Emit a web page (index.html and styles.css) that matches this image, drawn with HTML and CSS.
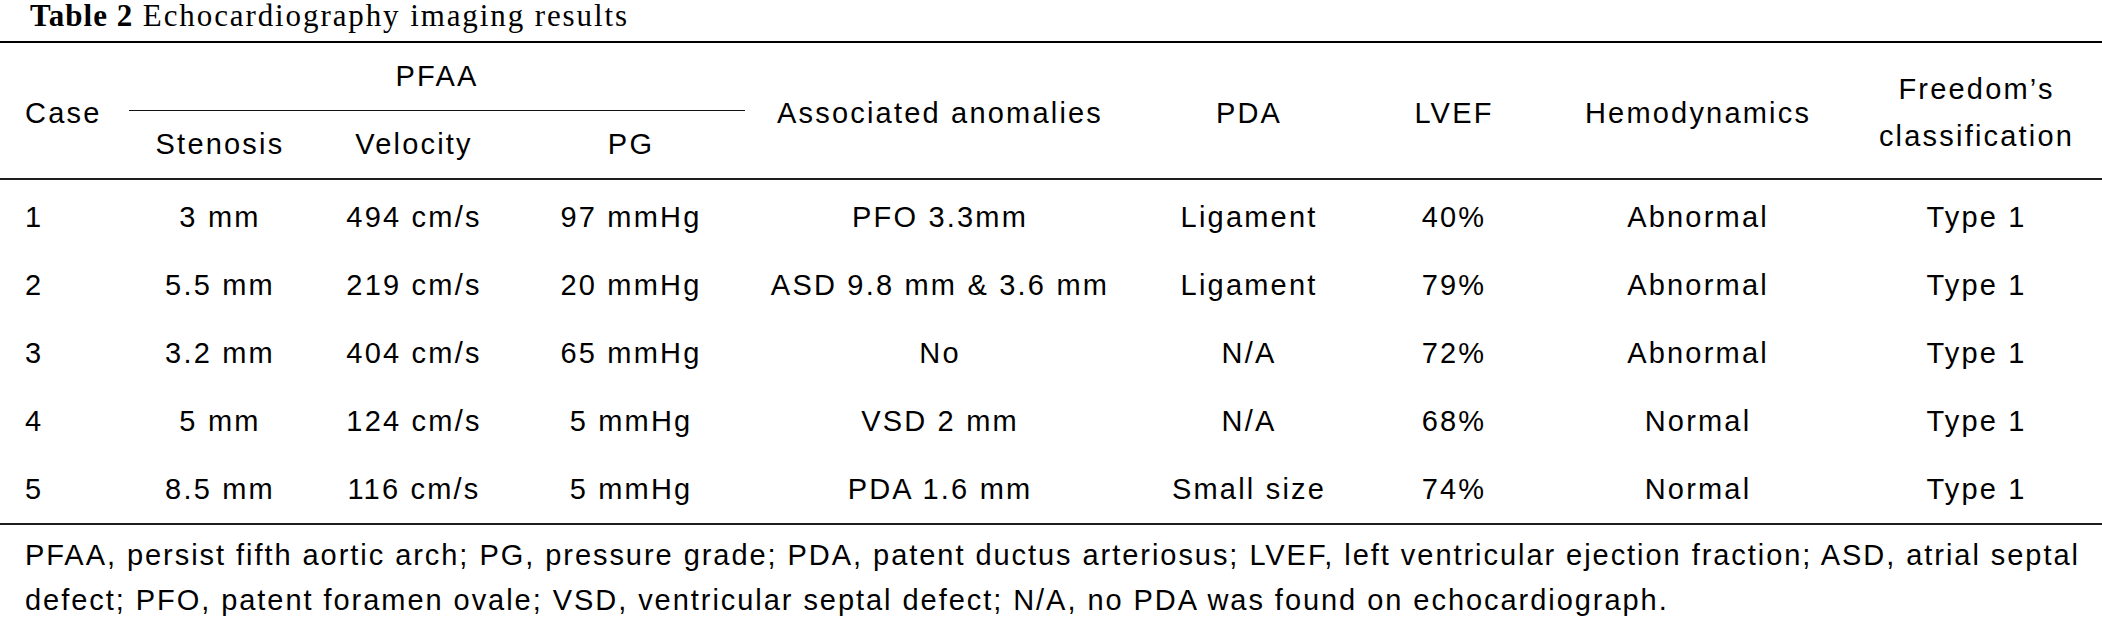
FILE: index.html
```html
<!DOCTYPE html>
<html lang="en">
<head>
<meta charset="utf-8">
<title>Table 2 Echocardiography imaging results</title>
<link rel="stylesheet" href="styles.css">
</head>
<body>
<div class="page">
  <h1 class="caption"><span class="cap-label">Table 2</span> Echocardiography imaging results</h1>
  <table class="results">
    <colgroup>
      <col class="c-case">
      <col class="c-sten">
      <col class="c-vel">
      <col class="c-pg">
      <col class="c-assoc">
      <col class="c-pda">
      <col class="c-lvef">
      <col class="c-hemo">
      <col class="c-class">
    </colgroup>
    <thead>
      <tr class="head-top">
        <th rowspan="2" class="case span">Case</th>
        <th colspan="3" class="group">PFAA</th>
        <th rowspan="2" class="span">Associated anomalies</th>
        <th rowspan="2" class="span">PDA</th>
        <th rowspan="2" class="span">LVEF</th>
        <th rowspan="2" class="span">Hemodynamics</th>
        <th rowspan="2" class="span">Freedom’s classification</th>
      </tr>
      <tr class="head-sub">
        <th>Stenosis</th>
        <th>Velocity</th>
        <th>PG</th>
      </tr>
    </thead>
    <tbody>
      <tr>
        <td class="case">1</td><td>3 mm</td><td>494 cm/s</td><td>97 mmHg</td><td>PFO 3.3mm</td><td>Ligament</td><td>40%</td><td>Abnormal</td><td>Type 1</td>
      </tr>
      <tr>
        <td class="case">2</td><td>5.5 mm</td><td>219 cm/s</td><td>20 mmHg</td><td>ASD 9.8 mm &amp; 3.6 mm</td><td>Ligament</td><td>79%</td><td>Abnormal</td><td>Type 1</td>
      </tr>
      <tr>
        <td class="case">3</td><td>3.2 mm</td><td>404 cm/s</td><td>65 mmHg</td><td>No</td><td>N/A</td><td>72%</td><td>Abnormal</td><td>Type 1</td>
      </tr>
      <tr>
        <td class="case">4</td><td>5 mm</td><td>124 cm/s</td><td>5 mmHg</td><td>VSD 2 mm</td><td>N/A</td><td>68%</td><td>Normal</td><td>Type 1</td>
      </tr>
      <tr>
        <td class="case">5</td><td>8.5 mm</td><td>116 cm/s</td><td>5 mmHg</td><td>PDA 1.6 mm</td><td>Small size</td><td>74%</td><td>Normal</td><td>Type 1</td>
      </tr>
    </tbody>
  </table>
  <p class="note">PFAA, persist fifth aortic arch; PG, pressure grade; PDA, patent ductus arteriosus; LVEF, left ventricular ejection fraction; ASD, atrial septal defect; PFO, patent foramen ovale; VSD, ventricular septal defect; N/A, no PDA was found on echocardiograph.</p>
</div>
</body>
</html>
```
FILE: styles.css
```css
html, body {
  margin: 0;
  padding: 0;
  background: #ffffff;
  overflow: hidden;
}

.page {
  width: 2102px;
  color: #000000;
  font-family: "Liberation Sans", Arial, Helvetica, sans-serif;
  font-size: 29px;
  letter-spacing: 2.2px;
}

.caption {
  margin: 0;
  padding: 0 0 10px 30px;
  font-family: "Liberation Serif", "Times New Roman", serif;
  font-size: 31px;
  font-weight: normal;
  line-height: 31px;
  letter-spacing: 1.9px;
}

.cap-label {
  font-weight: bold;
  letter-spacing: 1px;
}

.results {
  width: 2102px;
  table-layout: fixed;
  border-collapse: separate;
  border-spacing: 0;
  border-top: 2px solid #000000;
  border-bottom: 2px solid #1e1e1e;
}

.c-case { width: 129px; }
.c-sten { width: 182px; }
.c-vel { width: 206px; }
.c-pg { width: 228px; }
.c-assoc { width: 390px; }
.c-pda { width: 228px; }
.c-lvef { width: 182px; }
.c-hemo { width: 306px; }
.c-class { width: 251px; }

.results th,
.results td {
  padding: 0;
  text-align: center;
  vertical-align: middle;
  font-weight: normal;
  white-space: normal;
}

.results th {
  line-height: 47px;
}

.head-top {
  height: 68px;
}

.head-sub {
  height: 69px;
}

.results th.group {
  border-bottom: 1px solid #111111;
}

.results th.span {
  padding-top: 5px;
  border-bottom: 2px solid #1e1e1e;
}

.head-sub th {
  border-bottom: 2px solid #1e1e1e;
}

.results .case {
  text-align: left;
  padding-left: 25px;
}

.results td {
  line-height: 34px;
}

.results tbody tr {
  height: 68px;
}

.results tbody tr:first-child {
  height: 71px;
}

.results tbody tr:first-child td {
  padding-top: 3px;
}

.note {
  margin: 0;
  padding: 8px 0 0 25px;
  line-height: 45px;
  letter-spacing: 1.95px;
}
```
